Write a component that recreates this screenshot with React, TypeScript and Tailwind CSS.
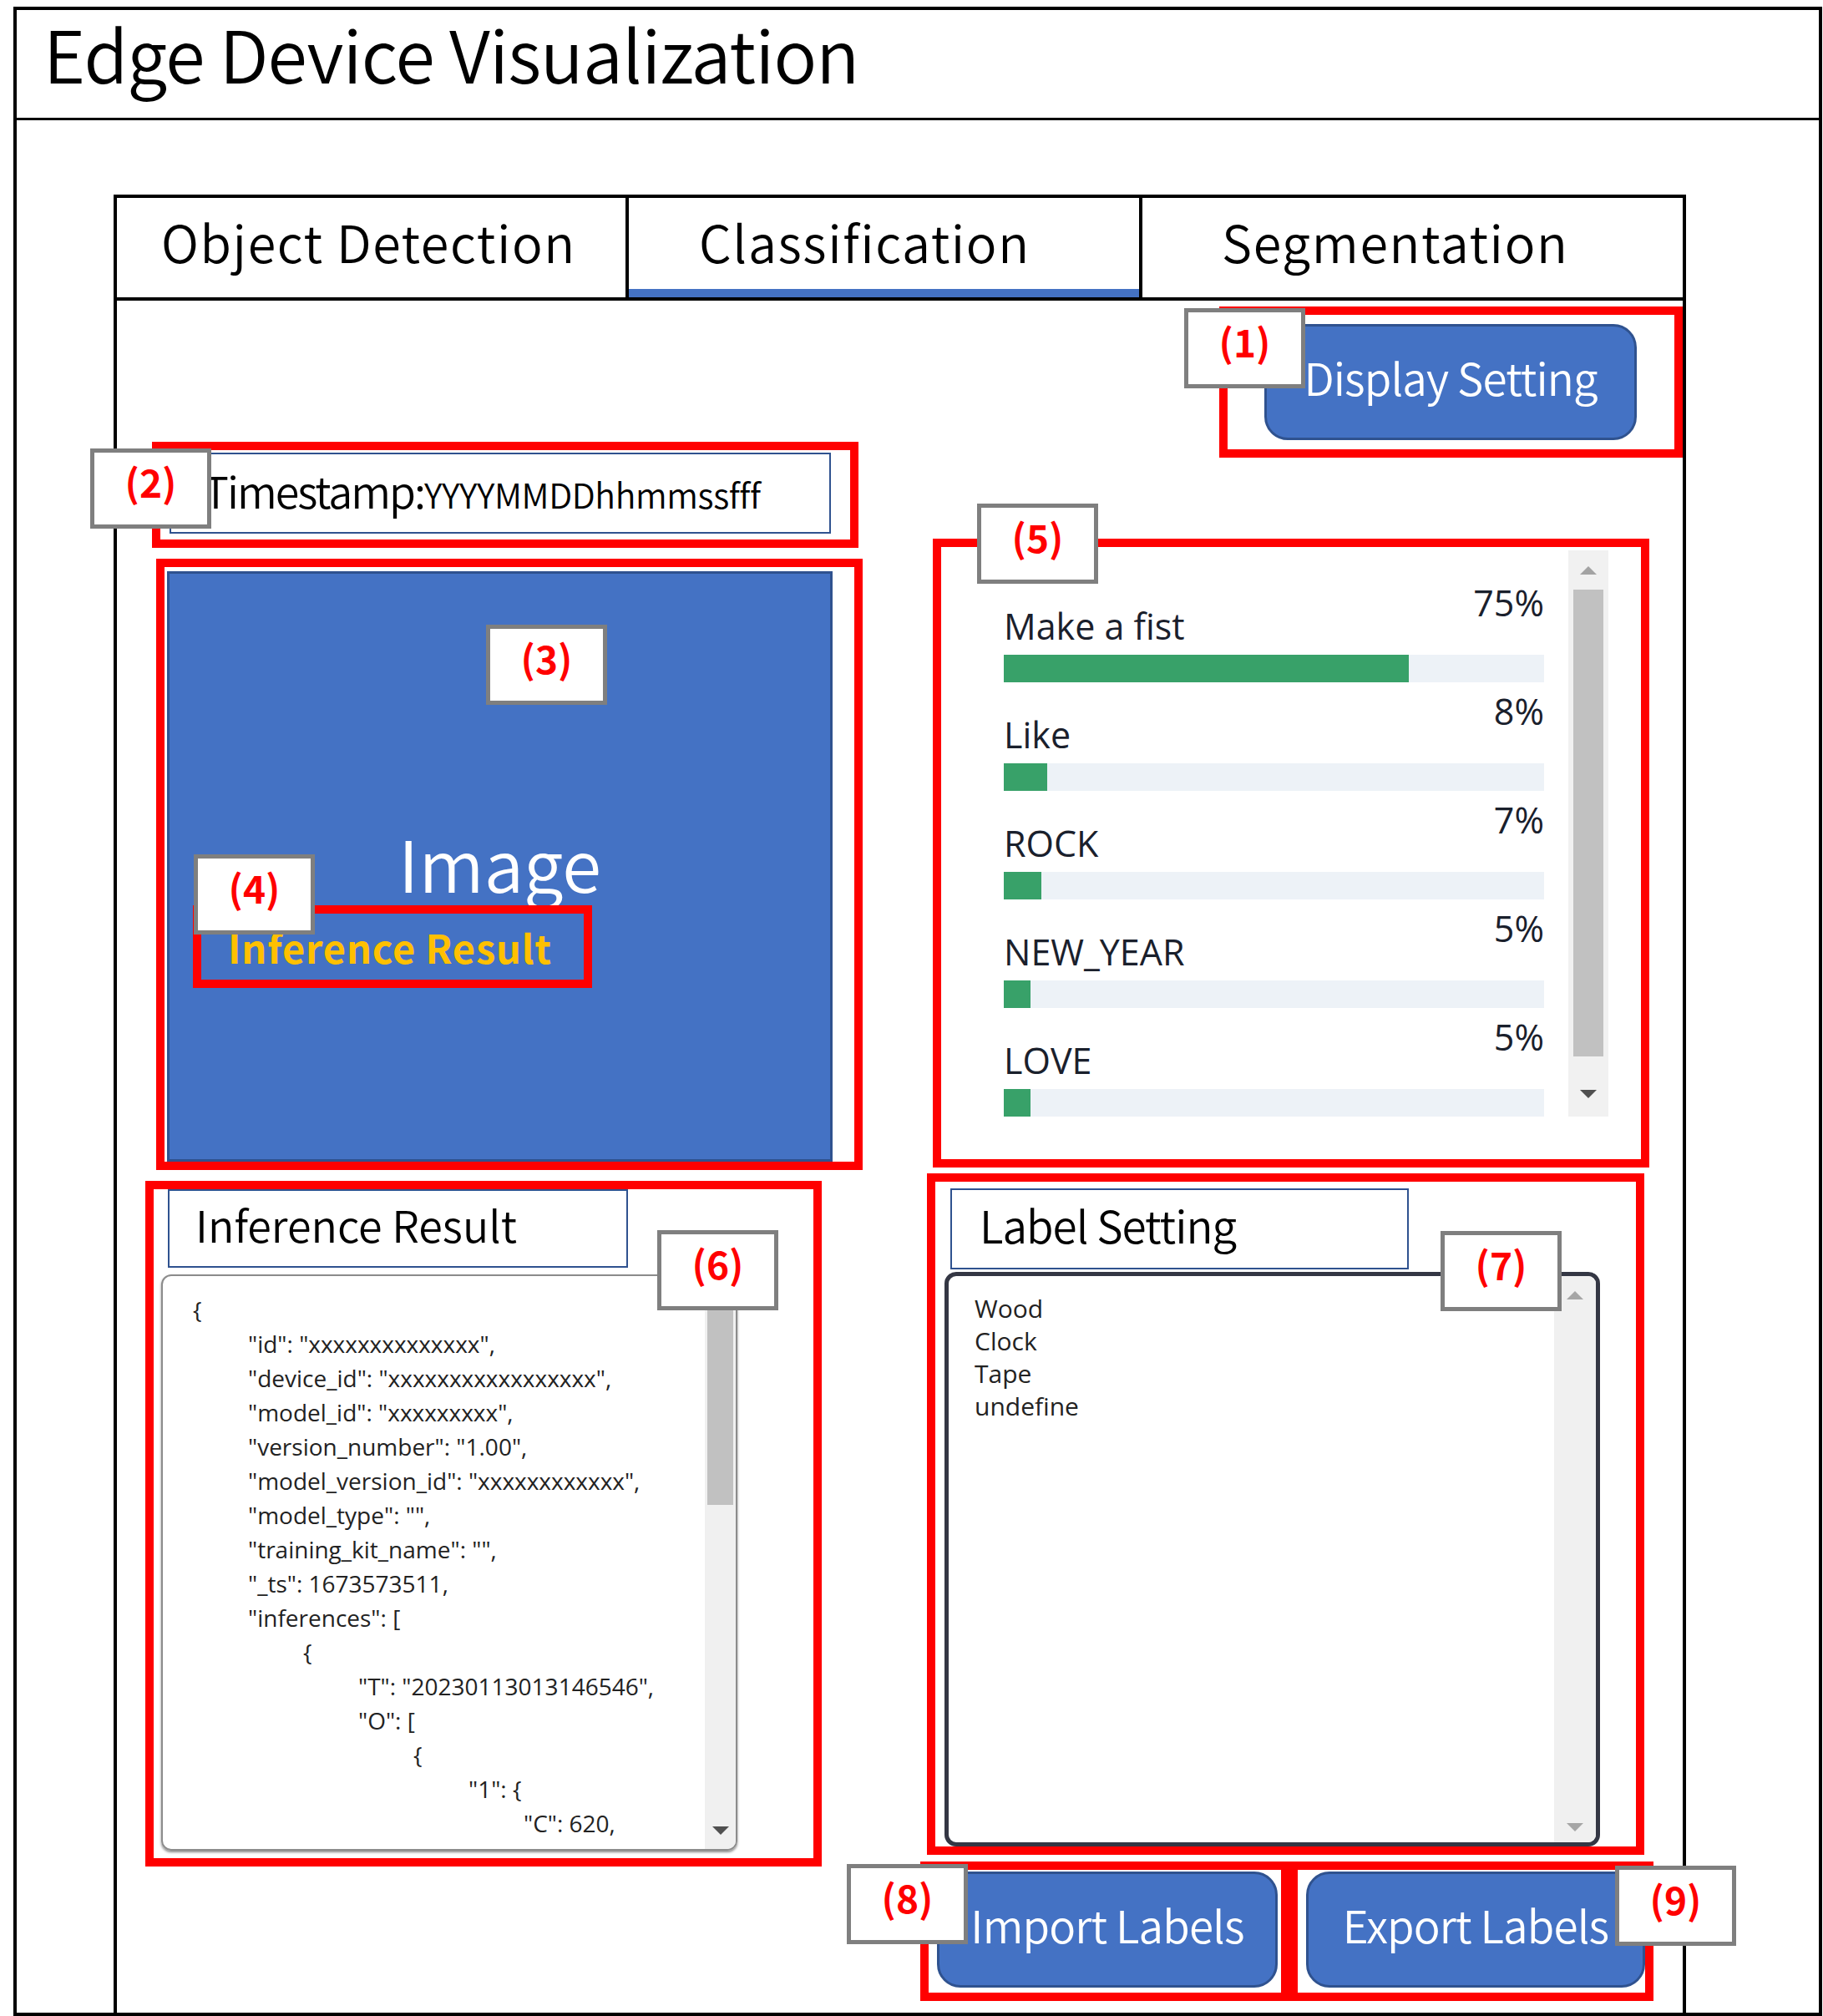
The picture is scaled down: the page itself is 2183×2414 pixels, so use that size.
import type { ReactNode } from 'react'

const jp = "font-['Noto_Sans_CJK_JP',sans-serif]"
const ui = "font-['Open_Sans',sans-serif]"

type Score = { label: string; value: number }

const scores: Score[] = [
  { label: 'Make a fist', value: 75 },
  { label: 'Like', value: 8 },
  { label: 'ROCK', value: 7 },
  { label: 'NEW_YEAR', value: 5 },
  { label: 'LOVE', value: 5 },
]

const indents = ['pl-0', 'pl-[66px]', 'pl-[132px]', 'pl-[198px]', 'pl-[264px]', 'pl-[330px]', 'pl-[396px]']

const jsonLines: [number, string][] = [
  [0, '{'],
  [1, '"id": "xxxxxxxxxxxxxx",'],
  [1, '"device_id": "xxxxxxxxxxxxxxxxx",'],
  [1, '"model_id": "xxxxxxxxx",'],
  [1, '"version_number": "1.00",'],
  [1, '"model_version_id": "xxxxxxxxxxxx",'],
  [1, '"model_type": "",'],
  [1, '"training_kit_name": "",'],
  [1, '"_ts": 1673573511,'],
  [1, '"inferences": ['],
  [2, '{'],
  [3, '"T": "20230113013146546",'],
  [3, '"O": ['],
  [4, '{'],
  [5, '"1": {'],
  [6, '"C": 620,'],
]

const labels = ['Wood', 'Clock', 'Tape', 'undefine']

// gray numbered callout over the mockup
function Tag({ n, pos }: { n: number; pos: string }) {
  return (
    <div
      className={`absolute z-10 flex h-[96px] w-[145px] items-center justify-center border-[5px] border-[#7f7f7f] bg-white pb-[18px] text-[46px] font-bold leading-none text-[#ff0000] ${jp} ${pos}`}
    >
      ({n})
    </div>
  )
}

function BlueButton({ children, size }: { children: ReactNode; size: string }) {
  return (
    <button
      type="button"
      className={`flex items-center justify-center rounded-[28px] border-[3px] border-[#2f528f] bg-[#4472c4] pb-[12px] text-[53px] font-[350] leading-none tracking-[-0.9px] text-white ${jp} ${size}`}
    >
      {children}
    </button>
  )
}

function UpArrow({ color }: { color: string }) {
  return <div className={`h-0 w-0 border-x-[10px] border-b-[10px] border-x-transparent ${color}`} />
}

function DownArrow({ color }: { color: string }) {
  return <div className={`h-0 w-0 border-x-[10px] border-t-[10px] border-x-transparent ${color}`} />
}

export default function App() {
  return (
    <div className="h-[2414px] w-[2183px] bg-white pl-[16px] pt-[8px] text-black">
      <div className="flex h-[2406px] w-[2166px] flex-col border-[4px] border-black">
        <header className="h-[132px] shrink-0 border-b-[3px] border-black pl-[32px] pt-[8px]">
          <h1 className={`text-[86px] font-[350] leading-[86px] tracking-[-0.9px] ${jp}`}>Edge Device Visualization</h1>
        </header>

        <div className="ml-[116px] mt-[89px] flex w-[1883px] flex-1 flex-col border-x-[4px] border-t-[4px] border-black">
          {/* tabs */}
          <div className={`flex h-[123px] shrink-0 border-b-[4px] border-black text-[61px] font-[350] leading-[61px] tracking-[1.6px] ${jp}`}>
            <div className="w-[613px] border-r-[4px] border-black pl-[53px] pt-[21px]">Object Detection</div>
            <div className="flex w-[615px] flex-col border-r-[4px] border-black pt-[21px]">
              <span className="pl-[84px]">Classification</span>
              <div className="mt-auto h-[10px] bg-[#4472c4]" />
            </div>
            <div className="flex-1 pl-[95px] pt-[21px]">Segmentation</div>
          </div>

          <div className="flex pl-[34px]">
            {/* left column */}
            <div className="flex w-[859px] flex-col pt-[169px]">
              <div className="relative ml-[8px] h-[127px] w-[846px] border-[10px] border-[#ff0000] pl-[11px] pt-[3px]">
                <Tag n={2} pos="-left-[84px] -top-[2px]" />
                <div className="flex h-[97px] w-[792px] items-center border-2 border-[#2f528f] pb-[8px] pl-[38px]">
                  <p className={`font-[350] leading-none ${jp}`}>
                    <span className="text-[52px] tracking-[-2px]">Timestamp:</span>
                    <span className="text-[41px] tracking-[-0.4px]">YYYYMMDDhhmmssfff</span>
                  </p>
                </div>
              </div>

              <div className="ml-[13px] mt-[13px] h-[732px] w-[846px] border-[10px] border-[#ff0000] pl-[3px] pt-[5px]">
                <div className="relative flex h-[707px] w-[797px] items-center justify-center border-[3px] border-[#2f528f] bg-[#4472c4]">
                  <Tag n={3} pos="left-[379px] top-[61px]" />
                  <span className={`mb-[12px] text-[85px] font-[350] leading-none text-white ${jp}`}>Image</span>
                  <div className="absolute left-[28px] top-[397px] flex h-[99px] w-[478px] items-center border-[10px] border-[#ff0000] pl-[32px]">
                    <Tag n={4} pos="-left-[9px] -top-[71px]" />
                    <span className={`text-[47px] font-bold leading-none tracking-[0.8px] text-[#ffc000] ${jp}`}>Inference Result</span>
                  </div>
                </div>
              </div>

              <div className="relative mt-[13px] h-[821px] w-[810px] border-[10px] border-[#ff0000]">
                <Tag n={6} pos="left-[603px] top-[49px]" />
                <div className={`ml-[17px] flex h-[94px] w-[551px] items-center border-2 border-[#2f528f] pb-[10px] pl-[31px] text-[52px] font-[350] leading-none ${jp}`}>
                  Inference Result
                </div>
                <div className="ml-[9px] mt-[8px] flex h-[690px] w-[690px] overflow-hidden rounded-[12px] border-2 border-[#8c8c8c] shadow-[0_2px_3px_rgba(0,0,0,0.45)]">
                  <div className={`flex-1 overflow-hidden whitespace-pre pl-[36px] pt-[20px] text-[28px] leading-[41px] text-[#222] ${ui}`}>
                    {jsonLines.map(([level, text], i) => (
                      <div key={i} className={indents[level]}>
                        {text}
                      </div>
                    ))}
                  </div>
                  <div className="flex w-[37px] flex-col items-center bg-[#f0f0f0] pb-[17px] pt-[17px]">
                    <div className="h-[257px] w-[31px] bg-[#c1c1c1]" />
                    <div className="mt-auto">
                      <DownArrow color="border-t-[#505050]" />
                    </div>
                  </div>
                </div>
              </div>
            </div>

            {/* right column */}
            <div className="ml-[69px] flex w-[913px] flex-col pt-[7px]">
              <div className="relative h-[181px] w-[555px] self-end border-[10px] border-[#ff0000] pl-[44px] pt-[11px]">
                <Tag n={1} pos="-left-[52px] -top-[8px]" />
                <BlueButton size="h-[139px] w-[446px]">Display Setting</BlueButton>
              </div>

              <div className="relative ml-[15px] mt-[97px] h-[753px] w-[858px] border-[10px] border-[#ff0000] pl-[75px] pt-[4px]">
                <Tag n={5} pos="left-[43px] -top-[52px]" />
                <div className="flex h-[678px]">
                  <div className={`flex w-[647px] flex-col gap-[13px] overflow-hidden pt-[41px] text-[#1a202c] ${ui}`}>
                    {scores.map((s) => (
                      <div key={s.label}>
                        <div className="flex justify-between text-[43px] leading-[43px]">
                          <span className="mt-[28px]">{s.label}</span>
                          <span>{s.value}%</span>
                        </div>
                        <div className="mt-[13px] h-[33px] bg-[#edf2f7]">
                          <div className="h-full bg-[#38a169]" style={{ width: `${s.value}%` }} />
                        </div>
                      </div>
                    ))}
                  </div>
                  <div className="ml-[29px] flex w-[48px] flex-col items-center bg-[#f1f1f1] pt-[19px]">
                    <UpArrow color="border-b-[#a3a3a3]" />
                    <div className="mt-[18px] h-[559px] w-[36px] bg-[#c1c1c1]" />
                    <div className="mt-[40px]">
                      <DownArrow color="border-t-[#505050]" />
                    </div>
                  </div>
                </div>
              </div>

              <div className="relative ml-[8px] mt-[7px] h-[816px] w-[859px] border-[10px] border-[#ff0000]">
                <Tag n={7} pos="left-[605px] top-[59px]" />
                <div className={`ml-[18px] mt-[8px] flex h-[97px] w-[549px] items-center border-2 border-[#2f528f] pb-[10px] pl-[33px] text-[53px] font-[350] leading-none tracking-[-1px] ${jp}`}>
                  Label Setting
                </div>
                <div className="ml-[11px] mt-[3px] flex h-[688px] w-[785px] overflow-hidden rounded-[14px] border-[5px] border-[#343744]">
                  <div className={`flex-1 pl-[31px] pt-[19px] text-[30px] leading-[39px] text-[#222] ${ui}`}>
                    {labels.map((l) => (
                      <div key={l}>{l}</div>
                    ))}
                  </div>
                  <div className="flex w-[50px] flex-col items-center justify-between bg-[#f0f0f0] pb-[13px] pt-[18px]">
                    <UpArrow color="border-b-[#a6a6a6]" />
                    <DownArrow color="border-t-[#a6a6a6]" />
                  </div>
                </div>
              </div>

              <div className="mt-[8px] flex">
                <div className="relative h-[167px] w-[442px] border-[10px] border-[#ff0000] pl-[10px] pt-[2px]">
                  <Tag n={8} pos="-left-[98px] -top-[7px]" />
                  <BlueButton size="h-[139px] w-[408px]">Import Labels</BlueButton>
                </div>
                <div className="relative h-[167px] w-[436px] border-[10px] border-[#ff0000] pl-[10px] pt-[2px]">
                  <BlueButton size="h-[139px] w-[406px]">Export Labels</BlueButton>
                  <Tag n={9} pos="left-[380px] -top-[5px]" />
                </div>
              </div>
            </div>
          </div>
        </div>
      </div>
    </div>
  )
}
